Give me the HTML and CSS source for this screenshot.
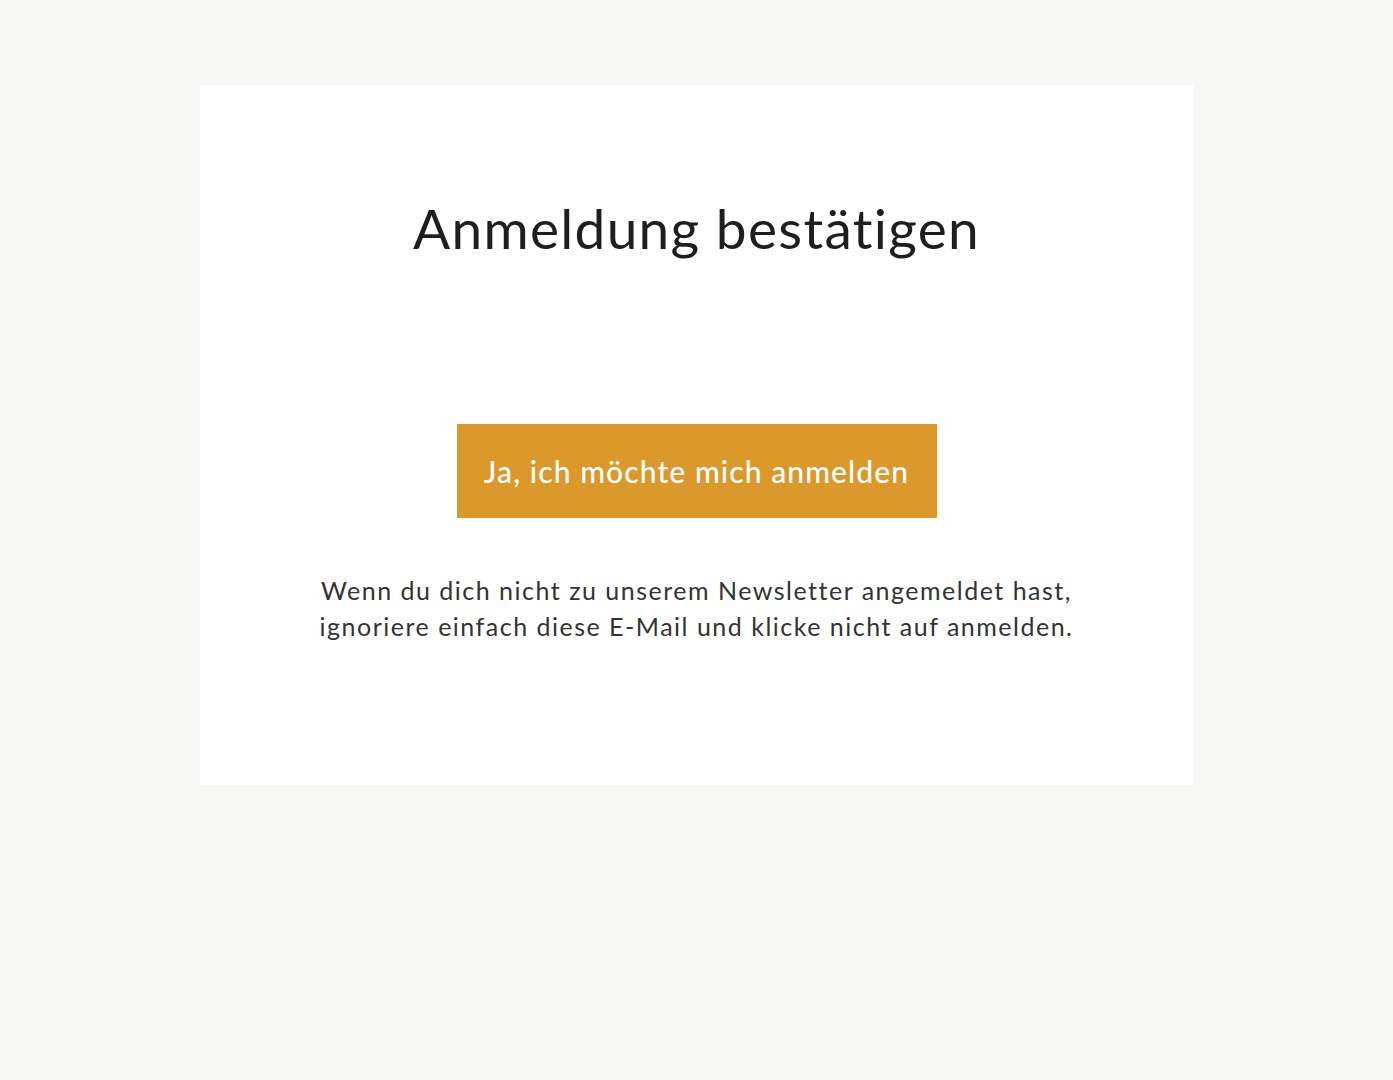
FILE: index.html
```html
<!DOCTYPE html>
<html lang="de">
<head>
<meta charset="utf-8">
<title>Anmeldung bestätigen</title>
<link rel="stylesheet" href="styles.css">
</head>
<body>
<main class="card">
  <h1 class="title">Anmeldung bestätigen</h1>
  <a class="btn" href="#">Ja, ich möchte mich anmelden</a>
  <p class="note">Wenn du dich nicht zu unserem Newsletter angemeldet hast,<br>ignoriere einfach diese E-Mail und klicke nicht auf anmelden.</p>
</main>
</body>
</html>
```
FILE: styles.css
```css
html, body {
  margin: 0;
  padding: 0;
}
body {
  background: #f7f7f5;
  font-family: "Lato", "Open Sans", sans-serif;
  color: #222222;
  padding-top: 85px;
}
.card {
  width: 993px;
  height: 700px;
  box-sizing: border-box;
  margin: 0 auto;
  background: #ffffff;
  display: flex;
  flex-direction: column;
  align-items: center;
  padding-top: 110px;
}
.title {
  margin: 0;
  font-size: 55px;
  font-weight: 400;
  line-height: 66px;
  letter-spacing: 1.3px;
  color: #1e1e1e;
}
.btn {
  margin-top: 163px;
  width: 480px;
  height: 94px;
  display: flex;
  align-items: center;
  justify-content: center;
  background: #db992c;
  color: #ffffff;
  text-decoration: none;
  font-size: 30px;
  font-weight: 500;
  letter-spacing: 1.1px;
}
.note {
  margin: 54px 0 0;
  text-align: center;
  font-size: 25px;
  line-height: 36px;
  letter-spacing: 1.5px;
  color: #333333;
}
```
